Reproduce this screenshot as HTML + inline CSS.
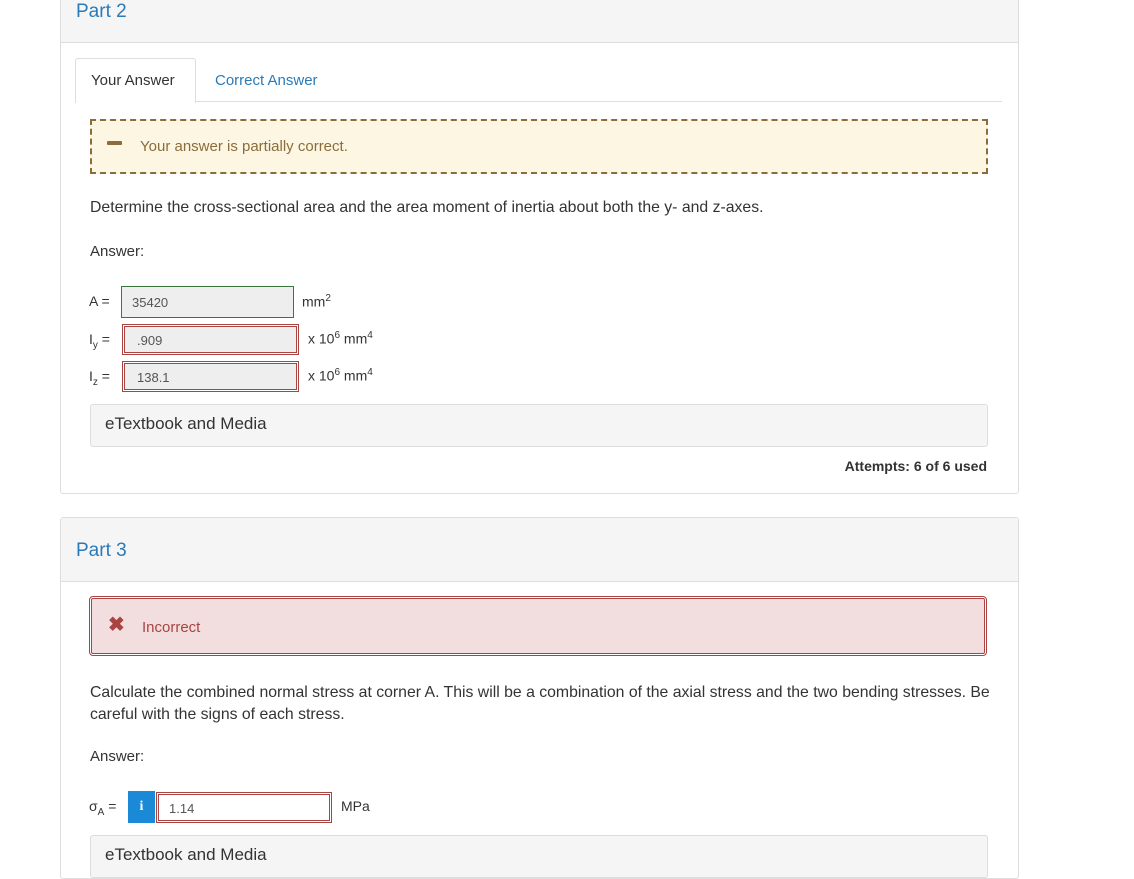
<!DOCTYPE html>
<html><head><style>
body{margin:0;width:1134px;height:862px;overflow:hidden;background:#fff;font-family:"Liberation Sans",sans-serif;color:#333;position:relative}
.a{position:absolute}
.panel{position:absolute;left:60px;width:957px;border:1px solid #ddd;border-radius:3px;background:#fff}
.hd{background:#f5f5f5;border-bottom:1px solid #ddd;color:#2a7ab8;font-size:19px}
.t{font-size:15px;color:#333}
.w{font-size:15.8px}
.box{position:absolute;background:#eee;font-size:13px;color:#555;box-sizing:border-box}
.red{border:1px solid #a94442;box-shadow:0 0 0 1px #fff,0 0 0 2px #a94442}
sup{font-size:10px}
</style></head><body>
<div class="panel" style="top:-5px;height:497px">
<div class="hd" style="height:46px;position:relative"><span class="a" style="left:15px;top:5px">Part 2</span></div>
</div>
<div class="a" style="left:75px;top:58px;width:119px;height:44px;border:1px solid #ddd;border-bottom:none;border-radius:3px 3px 0 0;background:#fff;z-index:2"></div>
<div class="a" style="left:75px;top:101px;width:927px;border-top:1px solid #ddd"></div>
<div class="a t" style="left:91px;top:72px;z-index:3">Your Answer</div>
<div class="a t" style="left:215px;top:72px;color:#2a7ab8">Correct Answer</div>
<div class="a" style="left:90px;top:119px;width:894px;height:51px;background:#fcf6e2;border:2px dashed #8a6d3b"></div>
<div class="a" style="left:107px;top:141px;width:15px;height:4px;background:#8a6d3b;border-radius:1px"></div>
<div class="a t" style="left:140px;top:138px;color:#8a6d3b">Your answer is partially correct.</div>
<div class="a t w" style="left:90px;top:199px">Determine the cross-sectional area and the area moment of inertia about both the y- and z-axes.</div>
<div class="a t" style="left:90px;top:243px">Answer:</div>
<div class="a t" style="left:89px;top:293px;font-size:14px">A =</div>
<div class="box" style="left:121px;top:286px;width:173px;height:32px;border:1px solid #3c763d;padding:8px 10px">35420</div>
<div class="a t" style="left:302px;top:293px;font-size:14px">mm<sup>2</sup></div>
<div class="a t" style="left:89px;top:331px;font-size:14px">I<sub style="font-size:10px">y</sub> =</div>
<div class="box red" style="left:124px;top:326px;width:173px;height:27px;padding:6px 12px">.909</div>
<div class="a t" style="left:308px;top:330px;font-size:14px">x 10<sup>6</sup> mm<sup>4</sup></div>
<div class="a t" style="left:89px;top:368px;font-size:14px">I<sub style="font-size:10px">z</sub> =</div>
<div class="box red" style="left:124px;top:363px;width:173px;height:27px;padding:6px 12px">138.1</div>
<div class="a t" style="left:308px;top:367px;font-size:14px">x 10<sup>6</sup> mm<sup>4</sup></div>
<div class="a" style="left:90px;top:404px;width:896px;height:41px;background:#f5f5f5;border:1px solid #ddd;border-radius:3px"></div>
<div class="a" style="left:105px;top:414px;font-size:17px">eTextbook and Media</div>
<div class="a t" style="right:147px;top:458px;font-weight:bold;font-size:14px">Attempts: 6 of 6 used</div>

<div class="panel" style="top:517px;height:360px">
<div class="hd" style="height:63px;position:relative"><span class="a" style="left:15px;top:22px">Part 3</span></div>
</div>
<div class="a" style="left:91px;top:598px;width:892px;height:54px;background:#f2dede;border:1px solid #a94442;outline:1px solid #a94442;outline-offset:1px;border-radius:2px"></div>
<div class="a" style="left:108px;top:612px;font-size:20px;font-weight:bold;color:#a94442">✖</div>
<div class="a t" style="left:142px;top:619px;color:#a94442">Incorrect</div>
<div class="a t w" style="left:90px;top:682px;line-height:22px">Calculate the combined normal stress at corner A. This will be a combination of the axial stress and the two bending stresses. Be<br>careful with the signs of each stress.</div>
<div class="a t" style="left:90px;top:748px">Answer:</div>
<div class="a t" style="left:89px;top:798px;font-size:14px">σ<sub style="font-size:10px">A</sub> =</div>
<div class="a" style="left:128px;top:791px;width:27px;height:32px;background:#1a8ad6;color:#fff;font-weight:bold;font-size:14px;text-align:center;line-height:32px;font-family:'Liberation Serif',serif">i</div>
<div class="box red" style="left:158px;top:794px;width:172px;height:27px;padding:6px 10px;background:#fff">1.14</div>
<div class="a t" style="left:341px;top:798px;font-size:14px">MPa</div>
<div class="a" style="left:90px;top:835px;width:896px;height:41px;background:#f5f5f5;border:1px solid #ddd;border-radius:3px"></div>
<div class="a" style="left:105px;top:845px;font-size:17px">eTextbook and Media</div>
</body></html>
